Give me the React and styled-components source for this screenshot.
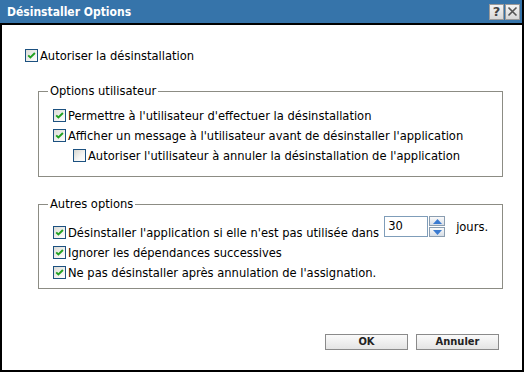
import styled, { createGlobalStyle } from "styled-components";

const GlobalStyle = createGlobalStyle`
  html, body {
    margin: 0;
    padding: 0;
    background: #ffffff;
  }
  body {
    font-family: "DejaVu Sans Condensed", "DejaVu Sans", sans-serif;
    font-size: 12.8px;
    color: #000;
  }
`;

const Dialog = styled.div`
  width: 524px;
  height: 372px;
  display: flex;
  flex-direction: column;
  box-sizing: border-box;
`;

const TitleBar = styled.div`
  height: 23px;
  flex: 0 0 23px;
  background: #3674aa;
  display: flex;
  align-items: center;
  justify-content: space-between;
  padding-left: 7px;
  padding-right: 2px;
  box-sizing: border-box;
  border-right: 2px solid #000;
`;

const Title = styled.div`
  color: #fff;
  font-weight: bold;
  font-size: 12px;
`;

const TitleButtons = styled.div`
  display: flex;
  gap: 1px;
`;

const TitleButton = styled.div`
  width: 15px;
  height: 16px;
  background: linear-gradient(#f4f4f4, #d8d8d8);
  border: 1px solid #9a9a9a;
  box-sizing: border-box;
  display: flex;
  align-items: center;
  justify-content: center;
  color: #444;
  font-weight: bold;
  font-size: 13px;
  font-family: "DejaVu Sans", sans-serif;
  line-height: 1;
`;

const Body = styled.div`
  flex: 1;
  display: flex;
  flex-direction: column;
  border: 2px solid #000;
  padding: 20px 23px 20px 23px;
  box-sizing: border-box;
`;

const Row = styled.div`
  display: flex;
  align-items: center;
  height: 20px;
  padding-left: ${(p) => p.$indent || 0}px;
`;

const Box = styled.span`
  width: 13px;
  height: 13px;
  flex: 0 0 13px;
  box-sizing: border-box;
  border: 1px solid #1c5180;
  background: ${(p) =>
    p.$checked
      ? "linear-gradient(135deg, #dcdcd7, #ffffff)"
      : "linear-gradient(135deg, #d6d6d0, #f6f6f4 60%, #ffffff)"};
  display: inline-flex;
  align-items: center;
  justify-content: center;
  margin-right: 2px;
`;

const Label = styled.span`
  white-space: nowrap;
`;

const Check = ({ checked, children }) => (
  <>
    <Box $checked={checked}>
      {checked && (
        <svg width="9" height="9" viewBox="0 0 9 9">
          <path d="M1.2 4.3 L3.4 6.5 L7.9 2" fill="none" stroke="#21a121" strokeWidth="1.9" />
        </svg>
      )}
    </Box>
    <Label>{children}</Label>
  </>
);

const Group = styled.fieldset`
  width: 465px;
  margin: ${(p) => p.$top}px 0 0 13px;
  padding: ${(p) => p.$pad}px 0 ${(p) => p.$bottom}px 14px;
  border: 1px solid #8c8c84;
  box-sizing: border-box;
`;

const Legend = styled.legend`
  margin-left: -5px;
  padding: 0 2px;
  line-height: 14px;
`;

const SpinRow = styled.div`
  display: flex;
  align-items: flex-start;
  height: 26px;
`;

const SpinLabel = styled.div`
  display: flex;
  align-items: center;
  height: 20px;
  align-self: flex-end;
`;

const Spinner = styled.div`
  display: flex;
  align-items: stretch;
  gap: 1px;
  margin-left: 5px;
  height: 21px;
`;

const SpinInput = styled.div`
  width: 44px;
  box-sizing: border-box;
  border: 1px solid #7f9db9;
  background: #fff;
  padding: 1px 0 0 3px;
`;

const SpinButtons = styled.div`
  display: flex;
  flex-direction: column;
  gap: 1px;
  width: 16px;
`;

const SpinButton = styled.div`
  flex: 1;
  box-sizing: border-box;
  border: 1px solid #8a9db0;
  background: linear-gradient(#fafafa, #d6dde6);
  display: flex;
  align-items: center;
  justify-content: center;
`;

const Unit = styled.span`
  margin-left: 11px;
  line-height: 21px;
`;

const Footer = styled.div`
  margin-top: auto;
  display: flex;
  justify-content: flex-end;
  gap: 8px;
`;

const Button = styled.button`
  width: 83px;
  height: 16px;
  padding: 0;
  box-sizing: border-box;
  border: 1px solid #8a8a8a;
  background: linear-gradient(#fafafa, #e4e4e4);
  font-family: "DejaVu Sans Condensed", "DejaVu Sans", sans-serif;
  font-weight: bold;
  font-size: 11px;
  color: #222;
  line-height: 14px;
`;

const Arrow = ({ up }) => (
  <svg width="9" height="5" viewBox="0 0 9 5">
    <path d={up ? "M0 5 L4.5 0 L9 5 Z" : "M0 0 L4.5 5 L9 0 Z"} fill="#3a7ad0" />
  </svg>
);

export default function App() {
  return (
    <>
      <GlobalStyle />
      <Dialog>
        <TitleBar>
          <Title>Désinstaller Options</Title>
          <TitleButtons>
            <TitleButton>?</TitleButton>
            <TitleButton>
              <svg width="11" height="11" viewBox="0 0 11 11">
                <path d="M1.5 1.5 L9.5 9.5 M9.5 1.5 L1.5 9.5" stroke="#555" strokeWidth="1.6" />
              </svg>
            </TitleButton>
          </TitleButtons>
        </TitleBar>
        <Body>
          <Row>
            <Check checked>Autoriser la désinstallation</Check>
          </Row>

          <Group $top={19} $pad={7} $bottom={11}>
            <Legend>Options utilisateur</Legend>
            <Row>
              <Check checked>Permettre à l'utilisateur d'effectuer la désinstallation</Check>
            </Row>
            <Row>
              <Check checked>Afficher un message à l'utilisateur avant de désinstaller l'application</Check>
            </Row>
            <Row $indent={20}>
              <Check>Autoriser l'utilisateur à annuler la désinstallation de l'application</Check>
            </Row>
          </Group>

          <Group $top={20} $pad={5} $bottom={6}>
            <Legend>Autres options</Legend>
            <SpinRow>
              <SpinLabel>
                <Check checked>Désinstaller l'application si elle n'est pas utilisée dans</Check>
              </SpinLabel>
              <Spinner>
                <SpinInput>30</SpinInput>
                <SpinButtons>
                  <SpinButton><Arrow up /></SpinButton>
                  <SpinButton><Arrow /></SpinButton>
                </SpinButtons>
              </Spinner>
              <Unit>jours.</Unit>
            </SpinRow>
            <Row>
              <Check checked>Ignorer les dépendances successives</Check>
            </Row>
            <Row>
              <Check checked>Ne pas désinstaller après annulation de l'assignation.</Check>
            </Row>
          </Group>

          <Footer>
            <Button>OK</Button>
            <Button>Annuler</Button>
          </Footer>
        </Body>
      </Dialog>
    </>
  );
}
